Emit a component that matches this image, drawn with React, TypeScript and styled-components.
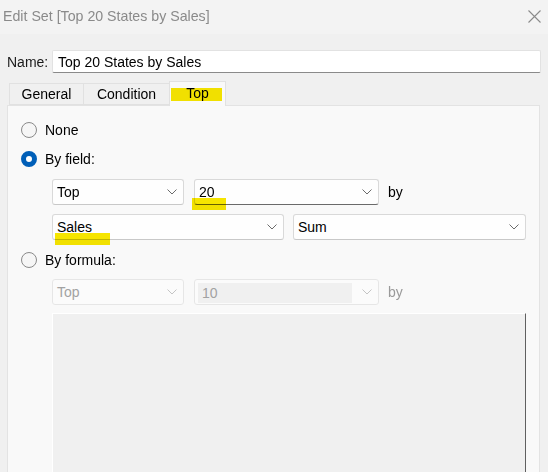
import React from "react";
import styled, { createGlobalStyle } from "styled-components";

const Global = createGlobalStyle`
  html, body { margin: 0; padding: 0; background: #f0f0f0; }
  body { font-family: "Liberation Sans", Arial, sans-serif; font-size: 14px; color: #1a1a1a; }
  * { box-sizing: border-box; }
`;

const Window = styled.div`
  width: 548px;
  height: 472px;
  display: flex;
  flex-direction: column;
  background: #f0f0f0;
  overflow: hidden;
`;

const TitleBar = styled.div`
  height: 34px;
  flex: none;
  display: flex;
  align-items: center;
  justify-content: space-between;
  padding: 0 7px 2px 3px;
  background: #f3f3f3;
  color: #8a8a8a;
  font-size: 14.2px;
`;

const NameRow = styled.div`
  margin-top: 16px;
  display: flex;
  align-items: center;
  padding-left: 7px;
  padding-right: 7px;
`;

const NameLabel = styled.span`
  width: 45px;
  flex: none;
`;

const NameInput = styled.div`
  flex: 1;
  height: 23px;
  background: #ffffff;
  border: 1px solid #e2e2e2;
  border-bottom: 1px solid #8a8a8a;
  border-radius: 2px;
  display: flex;
  align-items: center;
  padding-left: 5px;
  color: #000;
`;

const TabRow = styled.div`
  margin-top: 8px;
  margin-left: 9px;
  height: 24px;
  display: flex;
  align-items: flex-end;
  position: relative;
  z-index: 1;
`;

const Tab = styled.div<{ $active?: boolean; $w: number }>`
  position: relative;
  width: ${(p) => p.$w}px;
  height: ${(p) => (p.$active ? 25 : 22)}px;
  margin-bottom: ${(p) => (p.$active ? -1 : 0)}px;
  background: ${(p) => (p.$active ? "#f9f9f9" : "#f0f0f0")};
  border: 1px solid #e1e1e1;
  border-bottom: ${(p) => (p.$active ? "none" : "1px solid #e1e1e1")};
  display: flex;
  align-items: center;
  justify-content: center;
  padding-bottom: ${(p) => (p.$active ? 3 : 0)}px;
  color: #000;
  & + & { margin-left: -1px; }
`;

const Highlight = styled.span<{ $l: number; $t: number; $w: number; $h: number }>`
  position: absolute;
  left: ${(p) => p.$l}px;
  top: ${(p) => p.$t}px;
  width: ${(p) => p.$w}px;
  height: ${(p) => p.$h}px;
  background: #f7e600;
  mix-blend-mode: multiply;
  pointer-events: none;
`;

const Panel = styled.div`
  flex: 1;
  margin-left: 7px;
  width: 533px;
  background: #f9f9f9;
  border: 1px solid #e3e3e3;
  border-bottom: none;
  padding: 14px 0 0 13px;
  display: flex;
  flex-direction: column;
  min-height: 0;
`;

const RadioRow = styled.div<{ $mt: number }>`
  margin-top: ${(p) => p.$mt}px;
  height: 20px;
  display: flex;
  align-items: center;
  gap: 8px;
  color: #000;
`;

const Radio = styled.span<{ $on?: boolean }>`
  width: 16px;
  height: 16px;
  border-radius: 50%;
  flex: none;
  background: ${(p) => (p.$on ? "#ffffff" : "#f6f6f6")};
  border: ${(p) => (p.$on ? "5px solid #005fb8" : "1px solid #8a8a8a")};
`;

const Indented = styled.div<{ $mt: number }>`
  margin-top: ${(p) => p.$mt}px;
  margin-left: 31px;
  display: flex;
  align-items: center;
`;

const Select = styled.div<{ $w: number; $ml?: number; $disabled?: boolean; $underline?: boolean }>`
  position: relative;
  width: ${(p) => p.$w}px;
  margin-left: ${(p) => p.$ml ?? 0}px;
  height: 26px;
  flex: none;
  background: ${(p) => (p.$disabled ? "#fbfbfb" : "#fefefe")};
  border: 1px solid ${(p) => (p.$disabled ? "#e6e6e6" : "#d9d9d9")};
  border-bottom-color: ${(p) => (p.$underline ? "#6a6a6a" : p.$disabled ? "#e6e6e6" : "#c8c8c8")};
  border-radius: 3px;
  display: flex;
  align-items: center;
  padding-left: 4px;
  color: ${(p) => (p.$disabled ? "#a2a2a2" : "#000")};
`;

const SelectText = styled.span`
  flex: 1;
`;

const EditBox = styled.div`
  flex: 1;
  align-self: stretch;
  margin: 3px 0 1px -1px;
  background: #f0f0f0;
  display: flex;
  align-items: center;
  padding-left: 4px;
`;

const Chevron = styled.svg<{ $disabled?: boolean }>`
  width: 10px;
  height: 6px;
  margin: 0 6px 0 10px;
  flex: none;
  stroke: ${(p) => (p.$disabled ? "#c4c4c4" : "#6b6b6b")};
`;

const By = styled.span<{ $disabled?: boolean }>`
  margin-left: 9px;
  color: ${(p) => (p.$disabled ? "#9a9a9a" : "#000")};
`;

const FormulaArea = styled.div`
  margin-top: 8px;
  margin-left: 31px;
  width: 474px;
  flex: 1;
  background: #f0f0f0;
  border-top: 1px solid #ffffff;
  border-left: 1px solid #ffffff;
  border-right: 1px solid #606060;
`;

const Down = ({ disabled }: { disabled?: boolean }) => (
  <Chevron $disabled={disabled} viewBox="0 0 10 6" fill="none" strokeWidth={1}>
    <path d="M0.5 0.5 L5 5 L9.5 0.5" />
  </Chevron>
);

export default function App() {
  return (
    <>
      <Global />
      <Window>
        <TitleBar>
          <span>Edit Set [Top 20 States by Sales]</span>
          <svg width="13" height="13" viewBox="0 0 13 13" stroke="#8a8a8a" strokeWidth="1.1" fill="none">
            <path d="M0.5 0.5 L12.5 12.5 M12.5 0.5 L0.5 12.5" />
          </svg>
        </TitleBar>
        <NameRow>
          <NameLabel>Name:</NameLabel>
          <NameInput>Top 20 States by Sales</NameInput>
        </NameRow>
        <TabRow>
          <Tab $w={75}>General</Tab>
          <Tab $w={87}>Condition</Tab>
          <Tab $w={57} $active>
            <Highlight $l={1} $t={6} $w={51} $h={13} />
            Top
          </Tab>
        </TabRow>
        <Panel>
          <RadioRow $mt={0}>
            <Radio />
            None
          </RadioRow>
          <RadioRow $mt={9}>
            <Radio $on />
            By field:
          </RadioRow>
          <Indented $mt={10}>
            <Select $w={132}>
              <SelectText>Top</SelectText>
              <Down />
            </Select>
            <Select $w={185} $ml={10} $underline>
              <Highlight $l={-3} $t={18} $w={34} $h={12} />
              <SelectText>20</SelectText>
              <Down />
            </Select>
            <By>by</By>
          </Indented>
          <Indented $mt={9}>
            <Select $w={232}>
              <Highlight $l={2} $t={18} $w={55} $h={12} />
              <SelectText>Sales</SelectText>
              <Down />
            </Select>
            <Select $w={233} $ml={9}>
              <SelectText>Sum</SelectText>
              <Down />
            </Select>
          </Indented>
          <RadioRow $mt={10}>
            <Radio />
            By formula:
          </RadioRow>
          <Indented $mt={9}>
            <Select $w={132} $disabled>
              <SelectText>Top</SelectText>
              <Down disabled />
            </Select>
            <Select $w={185} $ml={10} $disabled>
              <EditBox>10</EditBox>
              <Down disabled />
            </Select>
            <By $disabled>by</By>
          </Indented>
          <FormulaArea />
        </Panel>
      </Window>
    </>
  );
}
